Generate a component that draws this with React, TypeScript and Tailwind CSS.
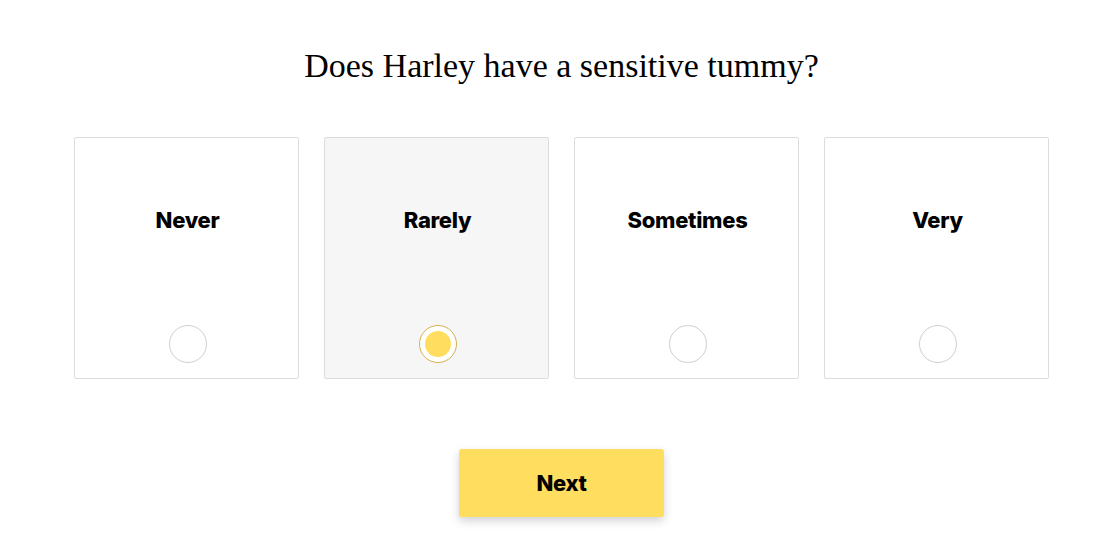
import { useState } from "react";

const options = ["Never", "Rarely", "Sometimes", "Very"];

export default function App() {
  const [selected, setSelected] = useState("Rarely");

  return (
    <div className="min-h-[540px] bg-white pl-[6px]">
      <div className="mx-auto flex w-[975px] flex-col items-center pt-[46px]">
        <h1 className="font-['Liberation_Serif',serif] text-[34px] leading-[40px] text-black">
          Does Harley have a sensitive tummy?
        </h1>
        <div className="mt-[51px] flex gap-[25px]">
          {options.map((option) => {
            const isSelected = selected === option;
            return (
              <button
                key={option}
                onClick={() => setSelected(option)}
                className={
                  isSelected
                    ? "flex h-[242px] w-[225px] flex-col items-center rounded-[2px] border border-[#dcdcdc] bg-[#f6f6f6] pt-[68px] pb-[15px] pl-[2px]"
                    : "flex h-[242px] w-[225px] flex-col items-center rounded-[2px] border border-[#dcdcdc] bg-white pt-[68px] pb-[15px] pl-[2px]"
                }
              >
                <span className="font-['Inter',sans-serif] text-[22px] leading-[28px] font-extrabold tracking-[-0.3px] text-black">
                  {option}
                </span>
                <span className="mt-auto flex h-[38px] w-[38px] items-center justify-center rounded-full">
                  {isSelected ? (
                    <span className="flex h-[38px] w-[38px] items-center justify-center rounded-full border border-[#d3b24e] bg-white">
                      <span className="h-[26px] w-[26px] rounded-full bg-[#ffdd5e]" />
                    </span>
                  ) : (
                    <span className="h-[38px] w-[38px] rounded-full border border-[#cfcfcf] bg-white" />
                  )}
                </span>
              </button>
            );
          })}
        </div>
        <button className="mt-[70px] h-[68px] w-[205px] rounded-[3px] bg-[#ffdd5e] font-['Inter',sans-serif] text-[22px] font-extrabold tracking-[-0.3px] text-black shadow-[0_4px_10px_rgba(0,0,0,0.18)]">
          Next
        </button>
      </div>
    </div>
  );
}
